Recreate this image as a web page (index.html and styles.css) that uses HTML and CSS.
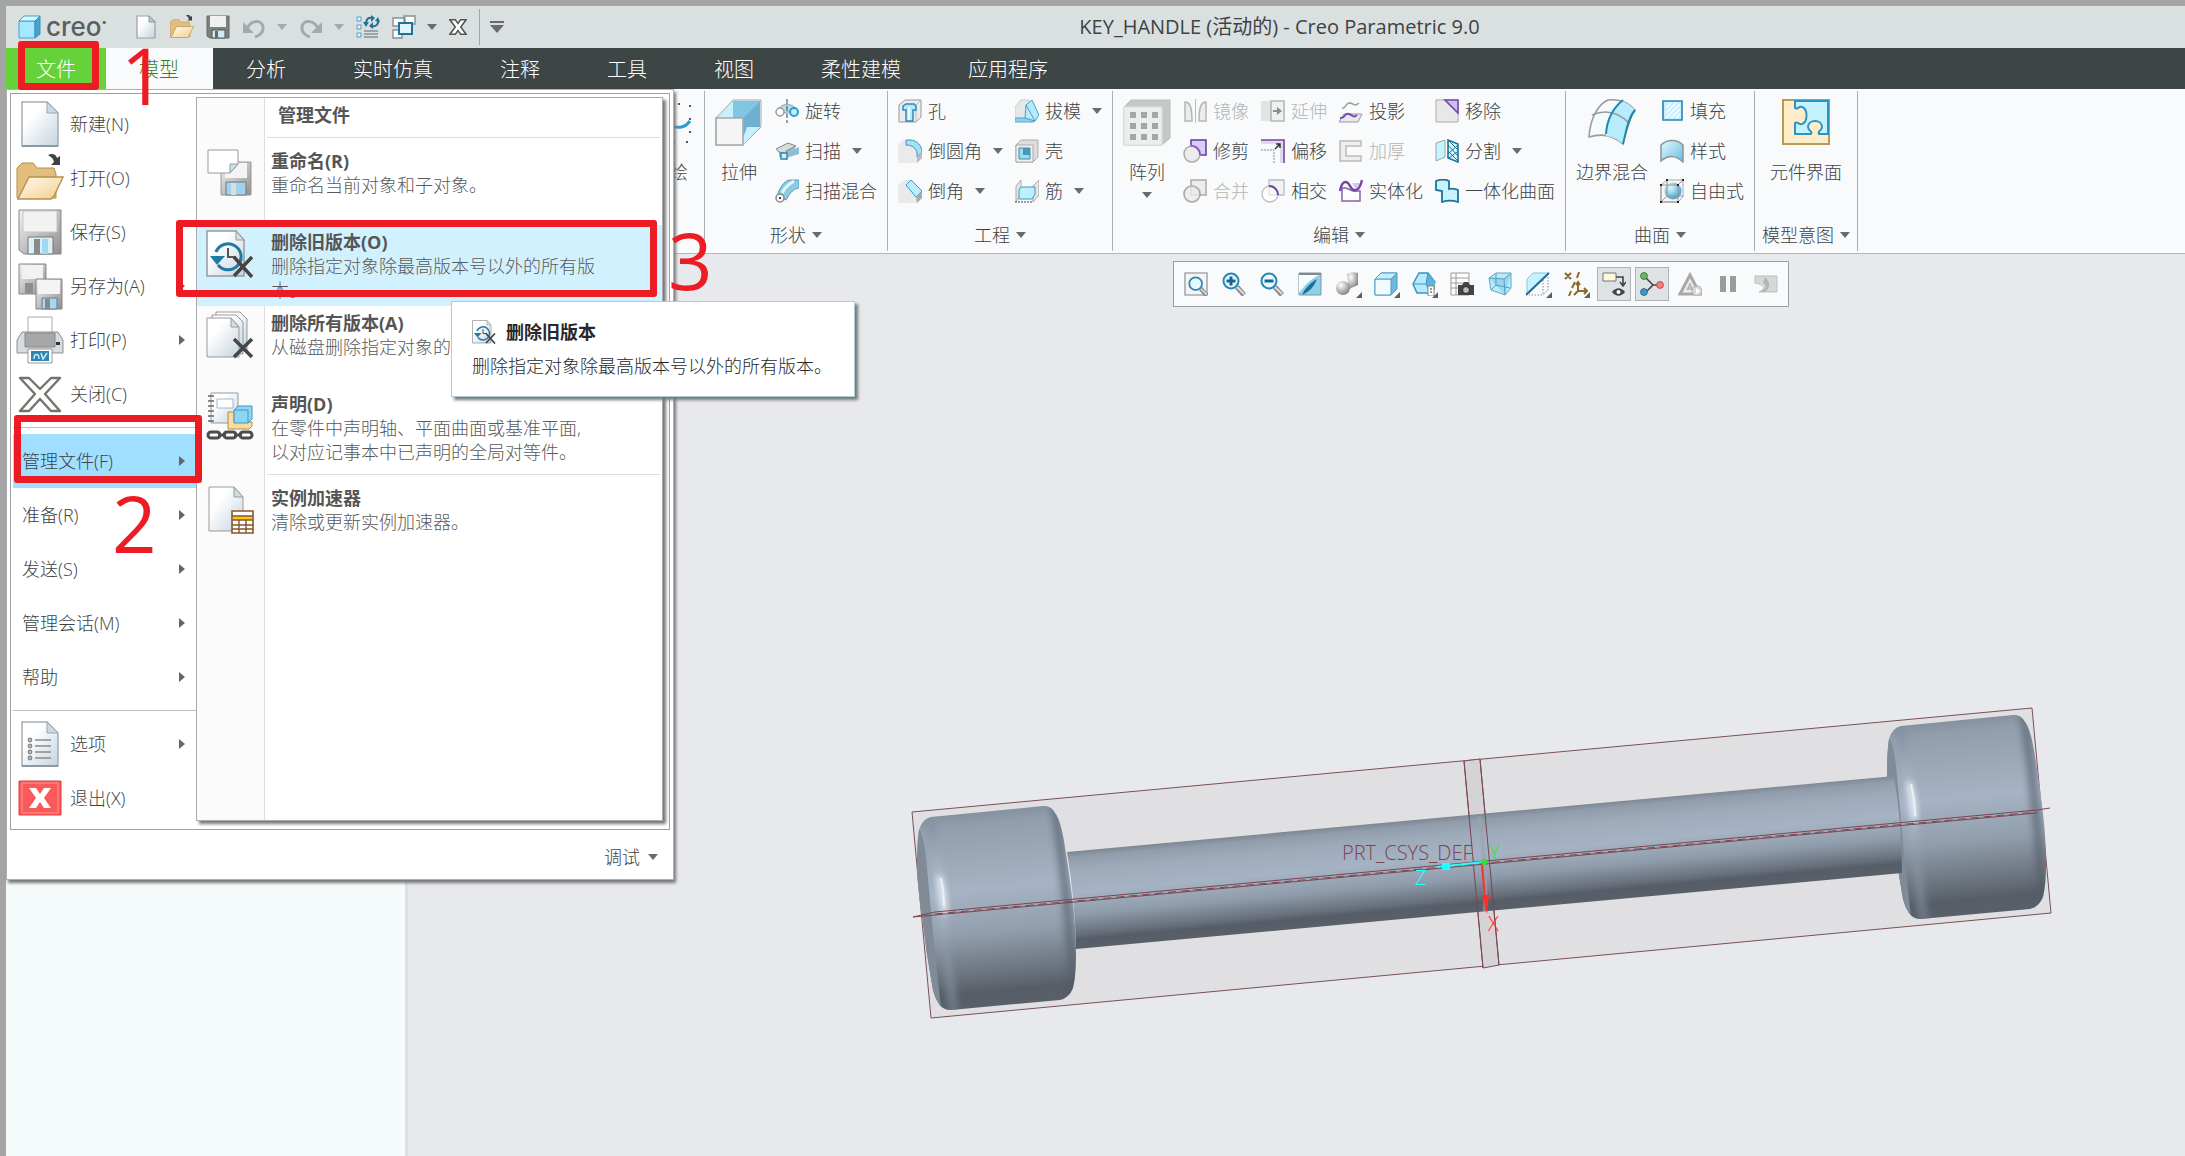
FILE: index.html
```html
<!DOCTYPE html>
<html lang="zh-CN">
<head>
<meta charset="utf-8">
<title>KEY_HANDLE (活动的) - Creo Parametric 9.0</title>
<link rel="stylesheet" href="styles.css">
</head>
<body>
<svg class="sprite" aria-hidden="true">
  <defs>
    <linearGradient id="paper" x1="0" y1="0" x2="1" y2="1"><stop offset="0.3" stop-color="#fff"/><stop offset="1" stop-color="#c3d4e0"/></linearGradient>
    <linearGradient id="metal" x1="0" y1="0" x2="1" y2="1"><stop offset="0" stop-color="#f4f4f4"/><stop offset="1" stop-color="#8e8e8e"/></linearGradient>
    <linearGradient id="sky" x1="0" y1="0" x2="1" y2="1"><stop offset="0" stop-color="#e4faff"/><stop offset="1" stop-color="#6bbbe0"/></linearGradient>
    <linearGradient id="gold" x1="0" y1="0" x2="1" y2="1"><stop offset="0" stop-color="#fffaf0"/><stop offset="1" stop-color="#f2cf8c"/></linearGradient>
    <radialGradient id="ball" cx="0.35" cy="0.3" r="0.8"><stop offset="0" stop-color="#fff"/><stop offset="1" stop-color="#777"/></radialGradient>
    <radialGradient id="blueball" cx="0.35" cy="0.3" r="0.8"><stop offset="0" stop-color="#e4f8ff"/><stop offset="1" stop-color="#2f9ac8"/></radialGradient>
  </defs>
  <symbol id="i-cube" viewBox="0 0 24 24"><path d="M1 6 6 1h16v18l-5 4H1z" fill="#7ccbea"/><path d="M1 6h16v17H1z" fill="#a5e8ff" stroke="#3fa3d0"/><path d="M1 6 6 1h16l-5 5z" fill="#d9f6ff" stroke="#3fa3d0"/><path d="M17 6l5-5v18l-5 4z" fill="#46a2ce" stroke="#3390be"/></symbol>
  <symbol id="i-new" viewBox="0 0 48 48"><path d="M6 2h25l11 11v33H6z" fill="url(#paper)" stroke="#a8adb1" stroke-width="1.5"/><path d="M31 2v11h11z" fill="#c9dae4" stroke="#9aa5ad"/><path d="M6 46h36" stroke="#8a9aa4" stroke-width="2"/></symbol>
  <symbol id="i-new24" viewBox="0 0 24 24"><path d="M3 1h12l6 6v16H3z" fill="url(#paper)" stroke="#9a9fa3" stroke-width="1.2"/><path d="M15 1v6h6z" fill="#b9c6ce" stroke="#8f989e"/></symbol>
  <symbol id="i-open" viewBox="0 0 48 48"><path d="M1 44V14l5-5h11l4 5h17l2 6v24z" fill="#e2bd7d" stroke="#b58f4b"/><path d="M2 45 13 23h34L38 42l-3 3z" fill="url(#gold)" stroke="#b58f4b" stroke-width="1.3"/><path d="M32 1c4-2 8-1 9 3l3-2v9h-9l3-3c-1-4-3-5-6-7z" fill="#3c4444"/></symbol>
  <symbol id="i-save" viewBox="0 0 48 48"><path d="M3 2h42v44H8l-5-4z" fill="url(#metal)" stroke="#858585"/><path d="M7 3h34v21H7z" fill="#f2f2f2" stroke="#c5c5c5"/><path d="M12 29h25v17H12z" fill="#dceef6" stroke="#777"/><path d="M18 31h6v15h-6z" fill="#8a8a8a"/><path d="M26 31h6v15h-6z" fill="#9fd9f2"/></symbol>
  <symbol id="i-save24" viewBox="0 0 24 24"><path d="M1 1h22v22H4l-3-2z" fill="#7d8080" stroke="#666"/><path d="M4 1h16v11H4z" fill="#f0f0f0"/><path d="M6 15h13v8H6z" fill="#cfeaf5" stroke="#555"/><path d="M9 16h3v7H9z" fill="#666"/></symbol>
  <symbol id="i-saveas" viewBox="0 0 48 48"><path d="M3 2h27v30H3z" fill="url(#metal)" stroke="#858585"/><path d="M6 3h21v14H6z" fill="#f2f2f2"/><path d="M9 21h8v10H9z" fill="#8a8f92"/><path d="M20 17h26v30H20z" fill="url(#metal)" stroke="#858585"/><path d="M22 18h22v14H22z" fill="#f4f4f4"/><path d="M26 36h15v11H26z" fill="#9fd9f2" stroke="#777"/><path d="M29 37h5v10h-5z" fill="#888"/></symbol>
  <symbol id="i-print" viewBox="0 0 48 48"><path d="M12 1h24v20H12z" fill="#fff" stroke="#aaa"/><path d="M6 16h36l5 8v13H1V24z" fill="#d9dcde" stroke="#8b8f92"/><path d="M9 17h30v14H9z" fill="#a5a7a9" stroke="#888"/><path d="M12 33h24v14H12z" fill="#fff" stroke="#999"/><path d="M15 35h18v10H15z" fill="#2f86ae"/><path d="M18 43c0-6 5-6 5 0M25 37l2 6 4-6" fill="none" stroke="#cdeefa" stroke-width="1.500"/><path d="M40 26h4v3h-4z" fill="#333"/></symbol>
  <symbol id="i-close" viewBox="0 0 48 48"><path d="M4 8h9l11 11L35 8h9L29 24l15 17h-9L24 29 13 41H4l15-17z" fill="#fff" stroke="#74736c" stroke-width="2.400" stroke-linejoin="round"/></symbol>
  <symbol id="i-x24" viewBox="0 0 20 20"><path d="M1 2h6l3 4 3-4h6l-6 8 6 8h-6l-3-4-3 4H1l6-8z" fill="#fff" stroke="#555" stroke-width="1.700"/></symbol>
  <symbol id="i-options" viewBox="0 0 48 48"><use href="#i-new"/><g stroke="#8a8a8a" stroke-width="1.6" fill="none"><path d="M19 20h16M19 26h16M19 32h16M19 38h16"/><circle cx="14" cy="20" r="1.6"/><circle cx="14" cy="26" r="1.6"/><circle cx="14" cy="32" r="1.6"/><circle cx="14" cy="38" r="1.6"/></g></symbol>
  <symbol id="i-exit" viewBox="0 0 48 48"><path d="M3 7h42v34H3z" fill="#fa5a5a" stroke="#e33c3c"/><path d="M6 9h36v30H6z" fill="none" stroke="#fd9292"/><path d="M13 14h7l4 6 4-6h7l-7 10 7 10h-7l-4-6-4 6h-7l7-10z" fill="#fff"/></symbol>
  <symbol id="i-rename" viewBox="0 0 48 48"><path d="M15 13h30v33H15z" fill="url(#metal)" stroke="#999"/><path d="M19 14h22v15H19z" fill="#f4f4f4"/><path d="M20 33h20v13H20z" fill="#9fd3ea" stroke="#777"/><path d="M25 34h5v12h-5z" fill="#ddd"/><path d="M2 1h30v14l-8 9H2z" fill="#fff" stroke="#999"/><path d="M32 15h-8v9z" fill="#c9e2ee" stroke="#999"/></symbol>
  <symbol id="i-purge" viewBox="0 0 48 48"><path d="M1 1h29l8 9v36H1z" fill="url(#paper)" stroke="#999" stroke-width="1.500"/><path d="M30 1v9h8z" fill="#d5dfe5" stroke="#999"/><path d="M12 35a13 13 0 1 0-2-13" fill="none" stroke="#1f7aa5" stroke-width="3"/><path d="M4 26h15l-8 9z" fill="#1f7aa5"/><path d="M22 18v9h8" fill="none" stroke="#555" stroke-width="2"/><path d="M28 27l18 20M46 27 28 46" stroke="#444" stroke-width="3.4"/></symbol>
  <symbol id="i-delall" viewBox="0 0 48 48"><g fill="url(#paper)" stroke="#999"><path d="M10 1h24l7 7v32H10z"/><path d="M6 4h24l7 7v32H6z"/><path d="M1 7h24l8 9v30H1z"/></g><path d="M25 7v9h8z" fill="#d5dfe5" stroke="#999"/><path d="M28 28l18 18M46 28 28 46" stroke="#444" stroke-width="3.4"/></symbol>
  <symbol id="i-declare" viewBox="0 0 48 48"><path d="M5 1h27v30H5z" fill="url(#paper)" stroke="#999"/><path d="M11 7h16v9H11z" fill="#fff" stroke="#9bc"/><path d="M2 4h6M2 9h6M2 14h6M2 19h6M2 24h6M2 29h6" stroke="#666" stroke-width="1.6"/><path d="M22 20h6v10h18v4l-3 3H22z" fill="#fbdc9d" stroke="#b08d45"/><path d="M28 18l4-4h14v13l-4 4H28z" fill="#8fd5f2" stroke="#3b98c4"/><path d="M28 18h14v13" fill="none" stroke="#3b98c4"/><g fill="none" stroke="#4c4c4c" stroke-width="3"><rect x="2" y="40" width="12" height="6" rx="3"/><rect x="18" y="40" width="12" height="6" rx="3"/><rect x="34" y="40" width="12" height="6" rx="3"/><path d="M12 43h8M28 43h8"/></g></symbol>
  <symbol id="i-accel" viewBox="0 0 48 48"><path d="M3 1h25l9 10v34H3z" fill="url(#paper)" stroke="#999"/><path d="M28 1v10h9z" fill="#cfdde5" stroke="#999"/><path d="M26 25h21v22H26z" fill="#fff" stroke="#87552a" stroke-width="1.6"/><path d="M27 30h19v4H27z" fill="#ffc800"/><path d="M26 30h21M26 34h21M26 39h21M26 43h21M33 34v13M40 34v13" stroke="#87552a" stroke-width="1.4"/></symbol>
  <symbol id="i-undo" viewBox="0 0 24 24"><path d="M1 7v11h11z" fill="#a4a9aa"/><path d="M5 14C8 5 20 4 21 12c1 5-4 9-8 10" fill="none" stroke="#a4a9aa" stroke-width="3"/></symbol>
  <symbol id="i-regen" viewBox="0 0 24 24"><g fill="#e6f8ff" stroke="#4b9fc4"><path d="M1 2h4v4H1zM1 10h4v4H1zM1 18h4v4H1z"/></g><path d="M8 16h14M8 19h14M8 22h14" stroke="#8a8f90" stroke-width="1.5"/><path d="M10 8c0-4 3-6 6-5M22 5c1 4-2 7-6 6" fill="none" stroke="#1f7298" stroke-width="2"/><path d="M15 0l4 3-4 4zM17 7v7l-4-3zM7 7h6l-3 5zM19 6l3-4 2 5z" fill="#1f7298"/></symbol>
  <symbol id="i-windows" viewBox="0 0 24 24"><g fill="#fff" stroke="#8b8f90" stroke-width="1.4"><path d="M1 3h12v8H1zM12 1h11v8H12zM1 15h9v8H1z"/></g><path d="M7 8h13v11H7z" fill="#dff4fc" stroke="#1f7298" stroke-width="2"/></symbol>
  <symbol id="i-extrude" viewBox="0 0 48 48"><path d="M1 19 18 1h28v27L28 46H1z" fill="#d5f3fc" stroke="#aaa"/><path d="M18 2h27L28 19H2z" fill="#7fc6e3"/><path d="M2 19 18 2v17z" fill="#c8effb"/><path d="M45 2v26L28 46V19z" fill="#6eb0cf"/><path d="M45 28 28 46V39l4-11z" fill="#c6f1ff"/><path d="M1 19h27v27H1z" fill="#f5f5f5" stroke="#a8a8a8" stroke-width="1.6"/></symbol>
  <symbol id="i-revolve" viewBox="0 0 24 24"><path d="M4 10c2-6 14-6 17 0l-3 6c-2-4-8-4-11 0z" fill="#b4dcea" stroke="#7ab"/><circle cx="5" cy="13" r="4" fill="#fff" stroke="#999" stroke-width="1.5"/><circle cx="19" cy="13" r="4" fill="#bcefff" stroke="#2e9bd0" stroke-width="2"/><path d="M12 0v24" stroke="#444" stroke-dasharray="5 2"/></symbol>
  <symbol id="i-sweep" viewBox="0 0 24 24"><path d="M1 10 13 4l8 3-2 3 5-2v7l-10 3-3 3-7-3v-4z" fill="#8dbdd0"/><path d="M1 10 13 4l8 3-10 5 1 3-8-2z" fill="#d9dcdc" stroke="#888"/><path d="M6 14h6v6H6z" fill="#c9f2ff" stroke="#38839f" stroke-width="1.4"/></symbol>
  <symbol id="i-blend" viewBox="0 0 24 24"><path d="M2 18C4 8 10 2 14 1l10 0v8c-7 1-10 7-13 12z" fill="#8ecbe2" stroke="#5a9db8"/><path d="M7 14c3-6 7-9 12-12" stroke="#e0f8ff" stroke-width="3" fill="none"/><circle cx="5" cy="19" r="4" fill="#f7f7f7" stroke="#888" stroke-width="1.5"/><circle cx="5" cy="19" r="1"/></symbol>
  <symbol id="i-hole" viewBox="0 0 24 24"><path d="M1 6 7 1h16v17l-5 5H1z" fill="#ececec" stroke="#999"/><path d="M18 6l5-5M18 6v17" stroke="#bbb"/><path d="M5 7l3-2h8l2 2v4h-3v11H8V11H5z" fill="#b2eafb" stroke="#2c8cb9" stroke-width="1.5"/><path d="M11 8v13" stroke="#fff" stroke-width="2"/></symbol>
  <symbol id="i-round" viewBox="0 0 24 24"><path d="M0 6 5 1h7l12 11v7l-5 5H0z" fill="#eaeaea"/><path d="M8 1h4c7 0 12 6 12 12l-5 5c1-8-4-12-11-12z" fill="#a6e0f5" stroke="#3c98c0"/><path d="M19 18l5-5v6l-5 5z" fill="#bbb"/></symbol>
  <symbol id="i-chamfer" viewBox="0 0 24 24"><path d="M0 6 6 1h7l11 12v6l-5 5H0z" fill="#eaeaea"/><path d="M13 1l11 11-6 6L8 6z" fill="#b9efff" stroke="#3c98c0"/><path d="M18 18l6-6v7l-5 5z" fill="#aaa"/></symbol>
  <symbol id="i-draft" viewBox="0 0 24 24"><path d="M0 8 6 1h8v18H0z" fill="#e6e8e8" stroke="#ccc"/><path d="M0 19h19v4H0z" fill="#8dd2ea" stroke="#5aa9c9"/><path d="M11 6l6-5 7 15-4 6-10-3z" fill="#b7ebfc" stroke="#479fc4"/><path d="M11 6l9 16" stroke="#479fc4"/></symbol>
  <symbol id="i-shell" viewBox="0 0 24 24"><path d="M1 6 6 1h17v17l-5 5H1z" fill="#ddd" stroke="#aaa"/><path d="M1 6h17v17H1z" fill="#f0f0f0" stroke="#aaa"/><path d="M4 9h11v11H4z" fill="#9edcf1" stroke="#3f8aa8"/><path d="M8 9h7v7H8z" fill="#4a96b5"/></symbol>
  <symbol id="i-rib" viewBox="0 0 24 24"><path d="M1 7 6 1v14l-5 8zM18 7l6-6v15l-6 7z" fill="#e5e5e5" stroke="#aaa"/><path d="M4 11l2-3h14v7l-3 5H4z" fill="#bff0ff" stroke="#3c98c0"/><path d="M0 23h18" stroke="#444" stroke-dasharray="2 1"/></symbol>
  <symbol id="i-pattern" viewBox="0 0 48 48"><path d="M1 8 8 1h39v38l-8 7H1z" fill="#c6c8c8" stroke="#bbb"/><path d="M1 8h38v38H1z" fill="#eceeee" stroke="#ddd"/><g fill="#a5a7a7"><path d="M7 13h6v6H7zM18 13h6v6h-6zM29 13h6v6h-6zM7 24h6v6H7zM18 24h6v6h-6zM29 24h6v6h-6zM7 35h6v6H7zM18 35h6v6h-6zM29 35h6v6h-6z"/></g></symbol>
  <symbol id="i-mirror" viewBox="0 0 24 24"><path d="M2 3c6 0 7 8 7 19H2zM23 3c-6 0-7 8-7 19h7z" fill="#ededed" stroke="#b4b8b8" stroke-width="1.5"/><path d="M12.500 0v24" stroke="#bbb"/></symbol>
  <symbol id="i-extend" viewBox="0 0 24 24"><path d="M0 2h10v20H0z" fill="#e2e3e3"/><path d="M10 2h13v20H10z" fill="#eff1f1" stroke="#b4b8b8" stroke-width="1.6"/><path d="M12 11h4V8l5 4-5 4v-3h-4z" fill="#8c8c8c"/></symbol>
  <symbol id="i-project" viewBox="0 0 24 24"><path d="M3 9c5 1 3-6 8-5s4 4 9 0" fill="none" stroke="#999" stroke-width="1.5"/><path d="M5 15h18l-4 8H0z" fill="#e7e9ea" stroke="#999"/><path d="M1 19c6 1 4-6 9-4s4 4 8 1" fill="none" stroke="#8046bf" stroke-width="2"/></symbol>
  <symbol id="i-remove" viewBox="0 0 24 24"><path d="M1 1h22v22H1z" fill="#e8e8e8" stroke="#aaa"/><path d="M10 1h13v13z" fill="#cdbdf2" stroke="#7548a4" stroke-width="1.6"/></symbol>
  <symbol id="i-trim" viewBox="0 0 24 24"><path d="M8 1h15v15h-6C17 10 14 7 8 7z" fill="#d8cdf7" stroke="#5f3a91" stroke-width="1.5"/><circle cx="9" cy="15" r="8" fill="#ececec" stroke="#aaa" stroke-width="1.5"/><path d="M8 7c5 0 9 4 9 9" fill="none" stroke="#9152c4" stroke-width="1.6"/></symbol>
  <symbol id="i-offset" viewBox="0 0 24 24"><path d="M0 1h23v23h-4V5H0z" fill="#e3d9ec"/><path d="M0 1h23v23" fill="none" stroke="#70479b" stroke-width="1.6"/><path d="M0 11h13v13" fill="none" stroke="#888" stroke-dasharray="2 1"/><path d="M14 10l5-5m-4 0h4v4" fill="none" stroke="#333" stroke-width="1.5"/></symbol>
  <symbol id="i-thicken" viewBox="0 0 24 24"><path d="M1 2h21v5H7v10h15v5H1z" fill="#eee" stroke="#bbb" stroke-width="1.5"/></symbol>
  <symbol id="i-split" viewBox="0 0 24 24"><path d="M1 4 10 1v17l-9 4z" fill="#c7f3ff" stroke="#9aa"/><path d="M13 1l10 4v18l-10-4z" fill="#d6f5ff" stroke="#1c7399" stroke-width="1.6"/><path d="M13 6l10 11M13 12l10 10M14 2l9 9M23 6 13 15M22 13l-8 6" stroke="#1c7399"/></symbol>
  <symbol id="i-merge" viewBox="0 0 24 24"><path d="M8 1h15v15H8z" fill="#ececec" stroke="#aaa" stroke-width="1.5"/><circle cx="9" cy="15" r="8" fill="#e8eaea" fill-opacity=".8" stroke="#aaa" stroke-width="1.7"/></symbol>
  <symbol id="i-intersect" viewBox="0 0 24 24"><path d="M8 1h15v15H8z" fill="#f2f2f2" stroke="#bbb" stroke-width="1.3"/><circle cx="9" cy="15" r="8" fill="#fff" fill-opacity=".6" stroke="#bbb" stroke-width="1.3"/><path d="M8 7c5 0 9 4 9 9" fill="none" stroke="#6d3f9f" stroke-width="2"/></symbol>
  <symbol id="i-solidify" viewBox="0 0 24 24"><path d="M3 22V9h4l7 3h7v10z" fill="#fff" stroke="#8b62a8" stroke-width="1.5"/><path d="M13 4h8l-4 7z" fill="#d7c6ec"/><path d="M1 12C3 1 8 1 11 7s9 7 12-6" fill="none" stroke="#7448a0" stroke-width="2.4"/></symbol>
  <symbol id="i-unify" viewBox="0 0 24 24"><path d="M1 2c5-2 9-2 13 0v8c4-1 6 0 9 1v12c-6-2-10-2-16 0V12l-6-1z" fill="#c9f2ff" stroke="#1c7399" stroke-width="1.8"/></symbol>
  <symbol id="i-boundary" viewBox="0 0 48 48"><path d="M1 38C2 20 10 5 20 1c10-1 20 2 27 10-6 8-9 22-12 34C26 37 14 34 1 38z" fill="#f3fbfe" stroke="#999" stroke-width="1.6"/><path d="M33 2c7 2 10 5 14 9-6 8-9 22-12 34-6-5-10-7-17-8 2-16 6-26 15-35z" fill="#b7ecfd"/><path d="M4 16c14-6 26-3 37 8" fill="none" stroke="#999" stroke-width="1.6"/><path d="M35 1C25 9 19 20 18 35M47 11c-7 8-9 22-12 34" fill="none" stroke="#2286b3" stroke-width="2"/></symbol>
  <symbol id="i-fill" viewBox="0 0 24 24"><path d="M3 2h19v19H3z" fill="#c3f1ff" stroke="#2b84ad" stroke-width="1.6"/><path d="M6 9l5-5M6 14 16 4M6 19 20 5M11 19l9-9M16 19l4-4" stroke="#fff" stroke-width="1.5"/></symbol>
  <symbol id="i-style" viewBox="0 0 24 24"><path d="M1 6c6-6 16-6 22 0v17c-7-7-15-7-22-1z" fill="url(#sky)" stroke="#8a9499" stroke-width="1.5"/></symbol>
  <symbol id="i-free" viewBox="0 0 24 24"><path d="M1 6 7 1h16v17l-5 5H1z" fill="#f5f5f5" stroke="#aaa"/><circle cx="13" cy="12" r="8.500" fill="url(#blueball)"/><path d="M1 6h17v17H1zM18 6l5-5M7 1v16l-6 6M7 17h16" fill="none" stroke="#999"/><path d="M0 5h2v2H0zM17 5h2v2h-2zM17 22h2v2h-2zM0 22h2v2H0zM6 0h2v2H6zM22 0h2v2h-2z" fill="#222"/></symbol>
  <symbol id="i-iface" viewBox="0 0 48 48"><path d="M1 1h46v44H1z" fill="#ffedc9" stroke="#bb9a56" stroke-width="2"/><path d="M13 2h33v33h-9c-2-3 3-3 3-7 0-8-14-8-14 0 0 4 5 4 3 7H13V24c3-2 3 2 7 1 6-2 6-15 0-17-4-1-4 3-7 1z" fill="#c5f2ff" stroke="#2e93c2" stroke-width="2"/></symbol>
  <symbol id="i-sketch" viewBox="0 0 48 48"><path d="M6 5h38v38H6z" fill="none" stroke="#555" stroke-width="2" stroke-dasharray="2 11"/><path d="M10 36c10-20 22 2 34-14" fill="none" stroke="#2e9bd0" stroke-width="3"/></symbol>
  <symbol id="i-lens" viewBox="0 0 24 24"><path d="M15 15l7 8" stroke="#8a8a8a" stroke-width="5"/><path d="M15 15l7 7" stroke="#ddd" stroke-width="2"/><circle cx="9" cy="9" r="7.500" fill="#e6f9ff" stroke="#2787b3" stroke-width="2"/></symbol>
  <symbol id="i-zoomfit" viewBox="0 0 24 24"><path d="M1 1h22v22H1z" fill="#f4f4f4" stroke="#aaa" stroke-width="1.6"/><g transform="translate(4 4) scale(.85)"><use href="#i-lens" width="24" height="24"/></g></symbol>
  <symbol id="i-zoomin" viewBox="0 0 24 24"><use href="#i-lens"/><path d="M9 4.500v9M4.500 9h9" stroke="#17658c" stroke-width="3"/></symbol>
  <symbol id="i-zoomout" viewBox="0 0 24 24"><use href="#i-lens"/><path d="M4.500 9h9" stroke="#17658c" stroke-width="3"/></symbol>
  <symbol id="i-repaint" viewBox="0 0 24 24"><path d="M1 1h22v22H1z" fill="#8fcfe8" stroke="#7d9aa7"/><path d="M1 3h20c-8 4-14 10-20 18z" fill="#f6fdff"/><path d="M19 7c-3 8-8 13-15 16 3-7 8-12 15-16z" fill="#1c7399"/><path d="M1 2h22" stroke="#888" stroke-width="2"/></symbol>
  <symbol id="i-render" viewBox="0 0 24 24"><path d="M11 2q5-3 11-1v12l-9 4z" fill="url(#ball)"/><circle cx="7" cy="16" r="7" fill="url(#ball)"/></symbol>
  <symbol id="i-display" viewBox="0 0 24 24"><path d="M1 7 7 1h16v16l-6 6H1z" fill="#6fb9da" stroke="#4b9fc4"/><path d="M1 7h16v16H1z" fill="#f1fcff" stroke="#4b9fc4"/><path d="M1 7 7 1h16l-6 6z" fill="#c5efff" stroke="#4b9fc4"/></symbol>
  <symbol id="i-views" viewBox="0 0 24 24"><path d="M1 12 7 1h9l7 9-5 11H5z" fill="#b7eaff" stroke="#3a94bd" stroke-width="1.5"/><path d="M16 1l7 9v8h-5l-4-6z" fill="#5fb2d6"/><path d="M1 12h13l2-11M14 12l4 9" fill="none" stroke="#3a94bd"/><path d="M16 14h6v10h-6z" fill="#fff" stroke="#888"/><path d="M18 17h2M18 20h2" stroke="#333"/></symbol>
  <symbol id="i-camera" viewBox="0 0 24 24"><path d="M1 1h18v22H1zM1 6h18M1 11h18M1 16h18M6 1v22" fill="#fff" stroke="#999"/><path d="M8 13h4l2-3h4l2 3h4v10H8z" fill="#444"/><circle cx="16" cy="18" r="3.500" fill="#bbb" stroke="#222"/></symbol>
  <symbol id="i-persp" viewBox="0 0 24 24"><path d="M1 6 8 1h15v15l-6 7L3 18z" fill="#bceafa" stroke="#5aa9c9"/><path d="M1 6l15 1 7-6-6 22z" fill="#7fc3dd" fill-opacity=".5"/><path d="M1 6l15 1 7-6M16 7l1 16M8 1v12l14 3M8 13l-5 5" fill="none" stroke="#4a9fc3"/></symbol>
  <symbol id="i-section" viewBox="0 0 24 24"><path d="M1 7 7 1h16L1 22z" fill="#c5f2ff" stroke="#8cc5dc"/><path d="M22 5v13l-5 5H3M17 8v14" stroke="#888" stroke-dasharray="1.500 1.500" fill="none"/><path d="M0 23 23 1" stroke="#1c6d94" stroke-width="2"/></symbol>
  <symbol id="i-datum" viewBox="0 0 24 24"><path d="M1 1l6 6M7 1 1 7M15 0l-2 6M11 10l-3 6M7 19l-2 5M14 11v8l-4 4M14 19h9M20 16l3 3-3 3M12 13l2-3 2 3" fill="none" stroke="#8c6b24" stroke-width="2"/></symbol>
  <symbol id="i-anno" viewBox="0 0 24 24"><path d="M1 1h13v8H1z" fill="#fff9dc" stroke="#777"/><path d="M14 5h7v8m-3-3 3 4 3-4" fill="none" stroke="#444" stroke-width="1.6"/><path d="M10 20c4-5 9-5 13 0-4 5-9 5-13 0z" fill="#444"/><circle cx="16.500" cy="20" r="2" fill="#fff"/></symbol>
  <symbol id="i-spin" viewBox="0 0 24 24"><path d="M5 5l8 8-7 7M13 13h8" stroke="#444" stroke-width="1.6" fill="none"/><circle cx="4" cy="4" r="3.400" fill="#6cb864" stroke="#38803a"/><circle cx="4" cy="20" r="3.400" fill="#4298c8" stroke="#286c94"/><circle cx="20" cy="13" r="3.400" fill="#f28080" stroke="#c94848"/></symbol>
  <symbol id="i-sim" viewBox="0 0 24 24"><path d="M12 3 22 22H2z" fill="#eee" stroke="#a7a9a9" stroke-width="3"/><path d="M12 10l4 8H8z" fill="#bbb"/><circle cx="19" cy="19" r="5" fill="#d9d9d9" stroke="#aaa"/><path d="M18 16l4 3-4 3z" fill="#fff"/></symbol>
  <symbol id="i-pause" viewBox="0 0 24 24"><path d="M4 4h6v16H4zM14 4h6v16h-6z" fill="#9b9d9d"/></symbol>
  <symbol id="i-result" viewBox="0 0 24 24"><path d="M1 4h22v16H5c7-3 7-7-4-9z" fill="#d6d7d7" stroke="#bdbfbf"/><path d="M11 5c6 5 5 11 0 15H6c7-4 7-6 3-9z" fill="#b4b6b6"/></symbol>
</svg>

<div class="app">
  <header class="titlebar">
    <div class="brand"><svg class="ic brand-cube"><use href="#i-cube"/></svg><span>creo<sup>•</sup></span></div>
    <div class="quick">
      <button aria-label="新建"><svg class="ic"><use href="#i-new24"/></svg></button>
      <button aria-label="打开"><svg class="ic"><use href="#i-open"/></svg></button>
      <button aria-label="保存"><svg class="ic"><use href="#i-save24"/></svg></button>
      <button aria-label="撤消"><svg class="ic"><use href="#i-undo"/></svg><i class="caret pale"></i></button>
      <button aria-label="重做"><svg class="ic flip"><use href="#i-undo"/></svg><i class="caret pale"></i></button>
      <button aria-label="重新生成"><svg class="ic"><use href="#i-regen"/></svg></button>
      <button aria-label="窗口"><svg class="ic"><use href="#i-windows"/></svg><i class="caret"></i></button>
      <button aria-label="关闭"><svg class="ic small"><use href="#i-x24"/></svg></button>
      <button class="customize" aria-label="自定义"><i class="caret"></i></button>
    </div>
    <h1>KEY_HANDLE (活动的) - Creo Parametric 9.0</h1>
  </header>
  <nav class="tabs">
    <button class="file">文件</button><button class="active">模型</button><button>分析</button><button>实时仿真</button><button>注释</button><button>工具</button><button>视图</button><button>柔性建模</button><button>应用程序</button>
  </nav>

  <section class="ribbon">
    <div class="group covered">
      <div class="tools"><button class="large"><svg class="big"><use href="#i-sketch"/></svg>草绘</button></div>
    </div>
    <div class="group">
      <div class="tools">
        <button class="large"><svg class="big"><use href="#i-extrude"/></svg>拉伸</button>
        <div class="col">
          <button><svg class="ic"><use href="#i-revolve"/></svg>旋转</button>
          <button><svg class="ic"><use href="#i-sweep"/></svg>扫描<i class="caret"></i></button>
          <button><svg class="ic"><use href="#i-blend"/></svg>扫描混合</button>
        </div>
      </div>
      <button class="label">形状<i class="caret"></i></button>
    </div>
    <div class="group">
      <div class="tools">
        <div class="col">
          <button><svg class="ic"><use href="#i-hole"/></svg>孔</button>
          <button><svg class="ic"><use href="#i-round"/></svg>倒圆角<i class="caret"></i></button>
          <button><svg class="ic"><use href="#i-chamfer"/></svg>倒角<i class="caret"></i></button>
        </div>
        <div class="col">
          <button><svg class="ic"><use href="#i-draft"/></svg>拔模<i class="caret"></i></button>
          <button><svg class="ic"><use href="#i-shell"/></svg>壳</button>
          <button><svg class="ic"><use href="#i-rib"/></svg>筋<i class="caret"></i></button>
        </div>
      </div>
      <button class="label">工程<i class="caret"></i></button>
    </div>
    <div class="group">
      <div class="tools">
        <button class="large"><svg class="big"><use href="#i-pattern"/></svg>阵列<i class="caret"></i></button>
        <div class="col">
          <button disabled><svg class="ic"><use href="#i-mirror"/></svg>镜像</button>
          <button><svg class="ic"><use href="#i-trim"/></svg>修剪</button>
          <button disabled><svg class="ic"><use href="#i-merge"/></svg>合并</button>
        </div>
        <div class="col">
          <button disabled><svg class="ic"><use href="#i-extend"/></svg>延伸</button>
          <button><svg class="ic"><use href="#i-offset"/></svg>偏移</button>
          <button><svg class="ic"><use href="#i-intersect"/></svg>相交</button>
        </div>
        <div class="col">
          <button><svg class="ic"><use href="#i-project"/></svg>投影</button>
          <button disabled><svg class="ic"><use href="#i-thicken"/></svg>加厚</button>
          <button><svg class="ic"><use href="#i-solidify"/></svg>实体化</button>
        </div>
        <div class="col">
          <button><svg class="ic"><use href="#i-remove"/></svg>移除</button>
          <button><svg class="ic"><use href="#i-split"/></svg>分割<i class="caret"></i></button>
          <button><svg class="ic"><use href="#i-unify"/></svg>一体化曲面</button>
        </div>
      </div>
      <button class="label">编辑<i class="caret"></i></button>
    </div>
    <div class="group">
      <div class="tools">
        <button class="large"><svg class="big"><use href="#i-boundary"/></svg>边界混合</button>
        <div class="col">
          <button><svg class="ic"><use href="#i-fill"/></svg>填充</button>
          <button><svg class="ic"><use href="#i-style"/></svg>样式</button>
          <button><svg class="ic"><use href="#i-free"/></svg>自由式</button>
        </div>
      </div>
      <button class="label">曲面<i class="caret"></i></button>
    </div>
    <div class="group last">
      <div class="tools"><button class="large"><svg class="big"><use href="#i-iface"/></svg>元件界面</button></div>
      <button class="label">模型意图<i class="caret"></i></button>
    </div>
  </section>

  <main class="workspace">
    <aside class="tree"></aside>
    <div class="canvas">
      <svg class="model" viewBox="408 254 1777 902" role="img" aria-label="KEY_HANDLE">
        <defs>
          <linearGradient id="shaft" gradientUnits="userSpaceOnUse" x1="1480" y1="814" x2="1489" y2="911"><stop offset="0" stop-color="#7e8893"/><stop offset=".06" stop-color="#919dab"/><stop offset=".2" stop-color="#9eabbb"/><stop offset=".42" stop-color="#a6b3c4"/><stop offset=".65" stop-color="#8e9baa"/><stop offset=".85" stop-color="#666e79"/><stop offset=".9" stop-color="#575d67"/><stop offset="1" stop-color="#5a606a"/></linearGradient>
          <linearGradient id="knobL" gradientUnits="userSpaceOnUse" x1="987" y1="810" x2="1006" y2="1006"><stop offset="0" stop-color="#84909c"/><stop offset=".07" stop-color="#919eac"/><stop offset=".4" stop-color="#a6b3c4"/><stop offset=".62" stop-color="#919eac"/><stop offset=".85" stop-color="#666e78"/><stop offset=".92" stop-color="#575d67"/><stop offset="1" stop-color="#5a606a"/></linearGradient>
          <linearGradient id="knobR" href="#knobL" gradientTransform="translate(970 -91)"/>
          <linearGradient id="rimL" gradientUnits="userSpaceOnUse" x1="920" y1="825" x2="940" y2="1005"><stop offset="0" stop-color="#8592a0"/><stop offset=".4" stop-color="#b9c8db"/><stop offset=".7" stop-color="#8996a5"/><stop offset="1" stop-color="#6d7884"/></linearGradient>
          <linearGradient id="rimR" href="#rimL" gradientTransform="translate(970 -91)"/>
          <filter id="soft" x="-100%" y="-20%" width="300%" height="140%"><feGaussianBlur stdDeviation="3"/></filter>
          <clipPath id="clipL"><path id="knobShape" d="M931 817 1043 806q8-1 12 7 5 6 9 28 5 30 9 63 3 28 3 50 0 22-3 34-4 10-13 12L951 1010q-8 0-12-6-4-6-6-14-7-37-11-74-5-32-5-52 0-22 2-34 3-11 12-13z"/></clipPath>
          <clipPath id="clipR"><use href="#knobShape" transform="translate(970 -91)"/></clipPath>
        </defs>
        <path d="M912 812 2032 708 2051 913 931 1018z" fill="#e0e0e2" stroke="#7c4f57"/>
        <path d="M1464 761 1480 759 1499 965 1483 968z" fill="#d6d3d6" stroke="#7c4f57"/>
        <g clip-path="url(#clipR)">
          <path d="M1880 690h180v240h-180z" fill="url(#knobR)"/>
          <path d="M1884 735q10 0 13 42 6 70 14 140l-20 10-20-120z" fill="#808b97"/>
          <path d="M1900 728q9 40 12 90 6 60 12 105" stroke="url(#rimR)" stroke-width="9" fill="none" filter="url(#soft)"/>
          <path d="M2024 715q14 100 19 190" stroke="#535d68" stroke-width="9" fill="none" opacity=".6" filter="url(#soft)"/>
          <path d="M1909 782q5 22 6 38" stroke="#fff" stroke-width="4" fill="none" filter="url(#soft)"/>
          <path d="M1911 784q4 18 4 32" stroke="#e8f1fb" stroke-width="2" fill="none"/>
        </g>
        <path d="M1067 852 1894 776q8 48 8 97L1076 949q-1-50-9-97z" fill="url(#shaft)"/>
        <g clip-path="url(#clipL)">
          <path d="M905 790h190v235H905z" fill="url(#knobL)"/>
          <path d="M914 826q10 0 13 42 6 70 14 140l-20 10-20-120z" fill="#808b97"/>
          <path d="M930 819q9 40 12 90 6 60 12 105" stroke="url(#rimL)" stroke-width="9" fill="none" filter="url(#soft)"/>
          <path d="M1055 806q14 100 19 190" stroke="#535d68" stroke-width="9" fill="none" opacity=".6" filter="url(#soft)"/>
          <path d="M939 876q5 22 6 38" stroke="#fff" stroke-width="4" fill="none" filter="url(#soft)"/>
          <path d="M941 878q3 14 3 28" stroke="#e8f1fb" stroke-width="2" fill="none"/>
        </g>
        <g fill="none" stroke="#7c4550">
          <path d="M1464 761l19 207M1480 759l19 206" />
          <path d="M913 917 935 912 2037 810 2050 808M913 917 935 915 2037 813"/>
          <path d="M935 914 2037 812" stroke-dasharray="8 5"/>
        </g>
        <path d="M1479 816q8 50 6 96" stroke="#98a3b0" stroke-width="4" fill="none" opacity=".6"/>
        <path d="M1484 862l-47 5" stroke="#2ff" stroke-width="2"/><path d="M1442 863h8v7h-8z" fill="#2ff"/>
        <path d="M1482 864l4 46" stroke="#ff2d2d" stroke-width="2"/><path d="M1482 895h7l-2 19z" fill="#ff2d2d"/>
        <circle cx="1484" cy="862" r="3" fill="#2ee82e"/>
        <g class="csys"><text x="1342" y="860" fill="#7c4550">PRT_CSYS_DEF</text><text x="1489" y="860" fill="#2ee82e">Y</text><text x="1415" y="885" fill="#2ff">Z</text><text x="1488" y="931" fill="#ff2d2d">X</text></g>
      </svg>
      <div class="viewbar">
        <button aria-label="重新调整"><svg class="ic"><use href="#i-zoomfit"/></svg></button>
        <button aria-label="放大"><svg class="ic"><use href="#i-zoomin"/></svg></button>
        <button aria-label="缩小"><svg class="ic"><use href="#i-zoomout"/></svg></button>
        <button aria-label="重画"><svg class="ic"><use href="#i-repaint"/></svg></button>
        <button class="more" aria-label="渲染选项"><svg class="ic"><use href="#i-render"/></svg></button>
        <button class="more" aria-label="显示样式"><svg class="ic"><use href="#i-display"/></svg></button>
        <button class="more" aria-label="已保存方向"><svg class="ic"><use href="#i-views"/></svg></button>
        <button aria-label="视图管理器"><svg class="ic"><use href="#i-camera"/></svg></button>
        <button aria-label="透视图"><svg class="ic"><use href="#i-persp"/></svg></button>
        <button class="more" aria-label="截面"><svg class="ic"><use href="#i-section"/></svg></button>
        <button class="more" aria-label="基准显示"><svg class="ic"><use href="#i-datum"/></svg></button>
        <button class="on" aria-label="注释显示"><svg class="ic"><use href="#i-anno"/></svg></button>
        <button class="on" aria-label="旋转中心"><svg class="ic"><use href="#i-spin"/></svg></button>
        <button disabled aria-label="仿真"><svg class="ic"><use href="#i-sim"/></svg></button>
        <button disabled aria-label="暂停"><svg class="ic"><use href="#i-pause"/></svg></button>
        <button disabled aria-label="结果"><svg class="ic"><use href="#i-result"/></svg></button>
      </div>
    </div>
  </main>

  <div class="filemenu">
    <div class="panes">
      <div class="commands">
        <button><svg class="big"><use href="#i-new"/></svg>新建(N)</button>
        <button><svg class="big"><use href="#i-open"/></svg>打开(O)</button>
        <button><svg class="big"><use href="#i-save"/></svg>保存(S)</button>
        <button class="sub"><svg class="big"><use href="#i-saveas"/></svg>另存为(A)</button>
        <button class="sub"><svg class="big"><use href="#i-print"/></svg>打印(P)</button>
        <button><svg class="big"><use href="#i-close"/></svg>关闭(C)</button>
        <hr>
        <button class="sub plain current">管理文件(F)</button>
        <button class="sub plain">准备(R)</button>
        <button class="sub plain">发送(S)</button>
        <button class="sub plain">管理会话(M)</button>
        <button class="sub plain">帮助</button>
        <hr>
        <button class="sub"><svg class="big"><use href="#i-options"/></svg>选项</button>
        <button><svg class="big"><use href="#i-exit"/></svg>退出(X)</button>
      </div>
      <div class="submenu">
        <h2>管理文件</h2>
        <hr class="top">
        <button><svg class="big"><use href="#i-rename"/></svg><span><b>重命名(R)</b>重命名当前对象和子对象。</span></button>
        <button class="current"><svg class="big"><use href="#i-purge"/></svg><span><b>删除旧版本(O)</b>删除指定对象除最高版本号以外的所有版本。</span></button>
        <button><svg class="big"><use href="#i-delall"/></svg><span><b>删除所有版本(A)</b>从磁盘删除指定对象的所有版本。</span></button>
        <button><svg class="big"><use href="#i-declare"/></svg><span><b>声明(D)</b>在零件中声明轴、平面曲面或基准平面,以对应记事本中已声明的全局对等件。</span></button>
        <hr>
        <button><svg class="big"><use href="#i-accel"/></svg><span><b>实例加速器</b>清除或更新实例加速器。</span></button>
      </div>
    </div>
    <div class="foot"><button>调试<i class="caret"></i></button></div>
  </div>

  <div class="tooltip" role="tooltip">
    <h3><svg class="ic"><use href="#i-purge"/></svg>删除旧版本</h3>
    <p>删除指定对象除最高版本号以外的所有版本。</p>
  </div>

  <div class="mark mark-file"></div>
  <div class="mark mark-manage"></div>
  <div class="mark mark-purge"></div>
  <span class="step step-one">1</span>
  <span class="step step-two">2</span>
  <span class="step step-three">3</span>
</div>
</body>
</html>
```
FILE: styles.css
```css
* { box-sizing: border-box; }
html, body { margin: 0; }
body {
  background: #a5a5a5;
  color: #3d4245;
  font: 300 18px/24px "Open Sans", "Noto Sans CJK SC", sans-serif;
}
button {
  display: flex;
  align-items: center;
  margin: 0;
  padding: 0;
  border: 0;
  background: none;
  color: inherit;
  font: inherit;
  white-space: nowrap;
}
.sprite { position: absolute; width: 0; height: 0; }
.ic { width: 24px; height: 24px; flex: none; display: block; }
.ic.small { width: 18px; height: 18px; }
.big { width: 48px; height: 48px; flex: none; display: block; }
.flip { transform: scaleX(-1); }
.caret {
  flex: none;
  width: 10px;
  height: 6px;
  background: #686c6e;
  clip-path: polygon(0 0, 100% 0, 50% 100%);
}
.caret.pale { background: #a4a9aa; }

.app {
  position: relative;
  display: flex;
  flex-direction: column;
  min-height: 100vh;
  padding: 6px 0 0 6px;
}

.titlebar {
  display: flex;
  align-items: center;
  height: 42px;
  padding-left: 12px;
  background: #dae0df;
}
.brand {
  display: flex;
  align-items: center;
  gap: 4px;
  width: 116px;
  color: #595f61;
  font: 500 26px/36px Inter, sans-serif;
}
.brand sup { font-size: 10px; line-height: 10px; vertical-align: 11px; }
.quick { display: flex; align-items: center; gap: 12px; }
.quick button { gap: 11px; height: 36px; }
.quick .customize { border-left: 1px solid #a0a6a6; padding-left: 10px; }
.customize .caret { width: 14px; height: 12px; clip-path: polygon(0 0, 100% 0, 100% 2px, 0 2px, 0 4px, 100% 4px, 50% 100%, 0 4px); }
.titlebar h1 {
  flex: 1;
  margin: 0;
  padding-right: 130px;
  text-align: center;
  font-size: 20px;
  line-height: 28px;
  font-weight: 400;
}

.tabs { display: flex; height: 41px; background: #3d4545; }
.tabs button { padding: 2px 34px 0 33px; color: #fff; font-size: 20px; }
.tabs button.file { padding: 2px 30px 0; background: #66d23a; }
.tabs button.active { background: #f8fafc; color: #3d8021; }

.ribbon {
  display: flex;
  padding: 2px 0;
  background: #f8fafc;
  border-bottom: 1px solid #b0b8b8;
}
.group { display: flex; flex-direction: column; border-left: 1px solid #aaafb1; }
.group.last { border-right: 1px solid #aaafb1; }
.group.covered { width: 698px; border-left: 0; align-items: flex-end; }
.tools { display: flex; justify-content: center; gap: 12px; height: 120px; padding: 0 10px; }
.col { display: grid; grid-template-rows: repeat(3, 40px); }
.col button { gap: 6px; }
.col .caret { margin-left: 5px; }
.large { flex-direction: column; padding-top: 8px; }
.large .big { margin-bottom: 13px; }
.large .caret { margin-top: 8px; }
.label { justify-content: center; gap: 6px; height: 40px; padding: 8px 7px 0; }
button:disabled { color: #b1b4b6; }

.workspace { flex: 1; display: flex; }
.tree { width: 402px; background: #f5fafb; border-right: 3px solid #dbe0e0; }
.canvas { position: relative; flex: 1; background: #e8e9ed; }
.model { position: absolute; inset: 0; width: 100%; height: 100%; }
.csys text { font: 300 20px "Open Sans", sans-serif; }
.viewbar {
  position: relative;
  display: flex;
  gap: 4px;
  width: max-content;
  margin: 7px auto 0 765px;
  padding: 5px;
  background: #f8fafc;
  border: 1px solid #9a9fa1;
}
.viewbar button { position: relative; justify-content: center; width: 34px; height: 34px; }
.viewbar .on { background: #dfe2e4; border: 1px solid #b0b3b5; }
.viewbar .more::after {
  content: "";
  position: absolute;
  right: 3px;
  bottom: 3px;
  width: 6px;
  height: 6px;
  background: #5c6062;
  clip-path: polygon(100% 0, 100% 100%, 0 100%);
}

.filemenu {
  position: absolute;
  left: 6px;
  top: 89px;
  width: 668px;
  padding: 3px;
  background: #fff;
  border: 1px solid #a9b2b6;
  box-shadow: 2px 3px 3px #777;
}
.panes {
  display: grid;
  grid-template-columns: 183px 1fr;
  padding: 3px 6px 4px 2px;
  border: 1px solid #a0a0a0;
}
.panes hr { width: auto; height: 1px; margin: 6px 0; border: 0; background: #bdbdbd; }
.commands button { width: 100%; height: 54px; padding: 0 11px 0 3px; gap: 6px; }
.commands .plain { padding-left: 9px; }
.commands .current { background: #a0dfff; }
.sub::after {
  content: "";
  width: 6px;
  height: 10px;
  margin-left: auto;
  background: #666;
  clip-path: polygon(0 0, 100% 50%, 0 100%);
}
.submenu {
  margin-bottom: 4px;
  border: 1px solid #aaa;
  background: linear-gradient(to right, #fbfbfb 67px, #ddd 67px, #ddd 68px, #fff 68px);
  box-shadow: 3px 3px 3px #777;
}
.submenu h2 { margin: 0 0 0 81px; font-size: 18px; line-height: 34px; height: 39px; color: #555; }
.submenu hr { margin-left: 70px; margin-right: 2px; background: #ddd; }
.submenu hr.top { margin-top: 0; }
.submenu button {
  align-items: flex-start;
  gap: 17px;
  width: 100%;
  height: 81px;
  padding: 5px 0 0 9px;
  color: #5a5a5a;
  text-align: left;
  white-space: normal;
}
.submenu span { width: 326px; }
.submenu b { display: block; color: #555; font-weight: 700; }
.submenu .current { background: #d2f1ff; }
.foot { display: flex; justify-content: flex-end; height: 46px; padding: 8px 12px 0 0; }
.foot button { gap: 8px; }

.tooltip {
  position: absolute;
  left: 451px;
  top: 301px;
  padding: 18px 22px 18px 20px;
  background: #fff;
  border: 1px solid #a9cfdd;
  box-shadow: 3px 3px 3px #777;
  color: #26282c;
}
.tooltip h3 { display: flex; gap: 10px; margin: 0 0 10px; font-size: 18px; line-height: 24px; }
.tooltip p { margin: 0; }

.mark { position: absolute; border: 7px solid #ed1c24; border-radius: 3px; }
.mark-file { left: 18px; top: 41px; width: 81px; height: 49px; }
.mark-manage { left: 14px; top: 415px; width: 188px; height: 68px; }
.mark-purge { left: 176px; top: 220px; width: 481px; height: 77px; }
.step { position: absolute; color: #ed1c24; font: 400 78px/78px "Open Sans", sans-serif; }
.step-one { left: 121px; top: 36px; }
.step-two { left: 112px; top: 484px; }
.step-three { left: 668px; top: 221px; }
```
